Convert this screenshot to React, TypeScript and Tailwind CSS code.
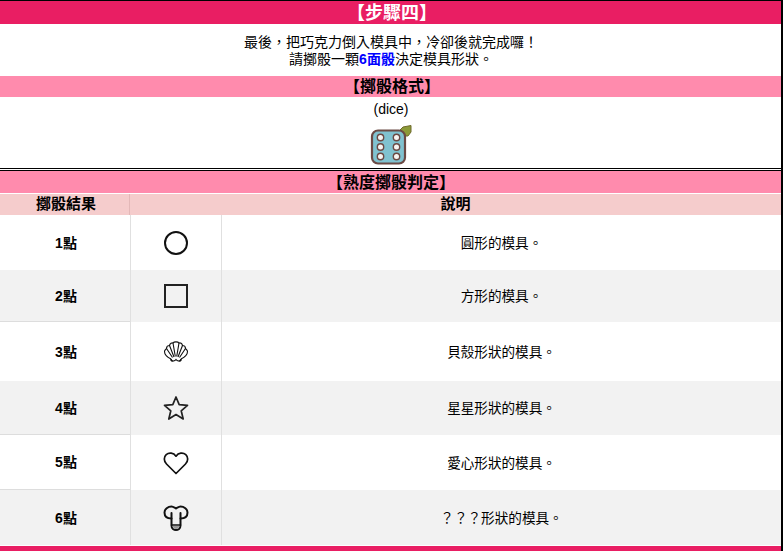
import React from "react";

const Circle = () => (
  <svg width="26" height="26" viewBox="0 0 26 26" fill="none" stroke="#111" strokeWidth="2"><circle cx="13" cy="13" r="11" /></svg>
);
const Square = () => (
  <svg width="26" height="26" viewBox="0 0 26 26" fill="none" stroke="#222" strokeWidth="2"><rect x="2" y="2" width="22" height="22" /></svg>
);
const Shell = () => (
  <svg width="26" height="24" viewBox="0 0 26 24" fill="none" stroke="#111" strokeWidth="1.1">
    <path d="M8 19 C4 17 1.5 14 1.5 11.5 C1.5 10 3 9.5 3.5 8.5 C3.5 6.5 5 5.5 6.5 5.5 C7 3.5 9 2.5 10 3 C11 1.5 15 1.5 16 3 C17.5 2.5 19 3.5 19.5 5.5 C21 5.5 22.5 6.5 22.5 8.5 C23 9.5 24.5 10 24.5 11.5 C24.5 14 22 17 18 19" />
    <path d="M8 19 C9 22 12 21 13 19.5 C14 21 17 22 18 19 M8 19 C7 21 10 22 10.5 20.5 M18 19 C19 21 16 22 15.5 20.5" />
    <path d="M9.5 17.5 L3.5 8.5 M11 17 L6.5 5.5 M12.3 16.5 L10 3 M13.7 16.5 L16 3 M15 17 L19.5 5.5 M16.5 17.5 L22.5 8.5" />
  </svg>
);
const Star = () => (
  <svg width="26" height="26" viewBox="0 0 26 26" fill="none" stroke="#222" strokeWidth="1.7" strokeLinejoin="round"><path d="M13 2 L16.2 9.6 L24.5 10.4 L18.2 15.8 L20.2 24 L13 19.6 L5.8 24 L7.8 15.8 L1.5 10.4 L9.8 9.6 Z" /></svg>
);
const Heart = () => (
  <svg width="26" height="24" viewBox="0 0 26 24" fill="none" stroke="#111" strokeWidth="1.7" strokeLinejoin="round"><path d="M13 22.5 L3.5 13 C0.5 10 0.8 5.8 3.2 3.6 C6 1.2 10.5 1.6 13 5.2 C15.5 1.6 20 1.2 22.8 3.6 C25.2 5.8 25.5 10 22.5 13 Z" /></svg>
);
const Mushroom = () => (
  <svg width="26" height="26" viewBox="0 0 26 26" fill="none" stroke="#111" strokeWidth="2" strokeLinejoin="round" strokeLinecap="round">
    <path d="M8.5 13.5 C4 13.5 1.5 11 1.5 7.5 C1.5 4 5 1.5 8.5 1.5 C10 1.5 12 3 13 3.5 C14 3 16 1.5 17.5 1.5 C21 1.5 24.5 4 24.5 7.5 C24.5 11 22 13.5 17.5 13.5" />
    <path d="M8.5 8 V20.5 C8.5 23.5 11 25 13 25 C15 25 17.5 23.5 17.5 20.5 V8" />
    <path d="M8.5 20 H17.5" strokeWidth="1.4" />
    <path d="M9.5 21 H16.5 C16 23 14.5 24 13 24 C11.5 24 10 23 9.5 21 Z" fill="#999" stroke="none" />
  </svg>
);
const Dice = () => (
  <svg width="42" height="41" viewBox="0 0 42 41">
    <path d="M29 6 L33 2 L41 0.5 L41 7 L38 11 L32 11 Z" fill="#8c9a38" stroke="#6f6a2c" strokeWidth="1" />
    <rect x="2" y="5.5" width="33" height="33" rx="6" fill="#80c2d0" stroke="#6b4a45" strokeWidth="2.2" />
    {[[10.5, 12.5], [26.5, 12.5], [10.5, 22], [26.5, 22], [10.5, 31.5], [26.5, 31.5]].map(([x, y]) => (
      <circle key={`${x}-${y}`} cx={x} cy={y} r="3.2" fill="#f8f5f3" stroke="#6b4a45" strokeWidth="1.4" />
    ))}
  </svg>
);

const rows = [
  { n: "1點", d: "圓形的模具。", I: Circle, h: "h-[55px]", bg: "bg-white", line: "" },
  { n: "2點", d: "方形的模具。", I: Square, h: "h-[52px]", bg: "bg-[#f2f2f2]", line: "border-b border-[#dddddd]" },
  { n: "3點", d: "貝殼形狀的模具。", I: Shell, h: "h-[59px]", bg: "bg-white", line: "" },
  { n: "4點", d: "星星形狀的模具。", I: Star, h: "h-[54px]", bg: "bg-[#f2f2f2]", line: "border-b border-[#dddddd]" },
  { n: "5點", d: "愛心形狀的模具。", I: Heart, h: "h-[55px]", bg: "bg-white", line: "border-b border-[#dddddd]" },
  { n: "6點", d: "？？？形狀的模具。", I: Mushroom, h: "h-[55px]", bg: "bg-[#f2f2f2]", line: "" },
];

export default function App() {
  return (
    <div className="h-[551px] w-[783px] overflow-hidden border-r-2 border-black bg-white font-['Liberation_Sans','Noto_Sans_CJK_TC',sans-serif] text-black">
      <div className="h-px bg-black" />
      <div className="flex h-[23px] items-center justify-center bg-[#e91e63] pl-[3px] pt-[1px] text-lg font-bold text-white">【步驟四】</div>
      <div className="flex h-[52px] flex-col items-center justify-center pl-[1px] pt-[2px] text-sm leading-[17px]">
        <p>最後，把巧克力倒入模具中，冷卻後就完成囉！</p>
        <p>請擲骰一顆<b className="text-[#0000ff]">6面骰</b>決定模具形狀。</p>
      </div>
      <div className="flex h-[21px] items-center justify-center bg-[#ff8bad] pl-[3px] pt-[1px] text-base font-bold">【擲骰格式】</div>
      <div className="flex h-[71px] flex-col items-center">
        <div className="mt-[4px] h-[16px] pl-[1px] text-sm leading-[16px]">(dice)</div>
        <div className="mt-[8px]"><Dice /></div>
      </div>
      <div className="h-px bg-black" />
      <div className="h-px bg-white" />
      <div className="h-px bg-black" />
      <div className="flex h-[22px] items-center justify-center bg-[#ff8bad] pl-[1px] pt-[2px] text-base font-bold">【熟度擲骰判定】</div>
      <div className="h-px bg-white" />
      <div className="flex h-[21px] bg-[#f5cccc] text-[15px] font-bold">
        <div className="flex w-[130px] items-center justify-center border-r border-[#e3b8b8] pl-[3px]">擲骰結果</div>
        <div className="flex flex-1 items-center justify-center">說明</div>
      </div>
      {rows.map(({ n, d, I, h, bg, line }) => (
        <div key={n} className={`flex ${h} ${bg}`}>
          <div className={`flex w-[130px] items-center justify-center pl-[2px] text-sm font-bold ${line}`}>{n}</div>
          <div className="flex w-[92px] items-center justify-center border-x border-[#e0e0e0]"><I /></div>
          <div className="flex flex-1 items-center justify-center pt-[3px] text-[13.6px]">{d}</div>
        </div>
      ))}
      <div className="h-px bg-white" />
      <div className="h-[5px] bg-[#e91e63]" />
    </div>
  );
}
